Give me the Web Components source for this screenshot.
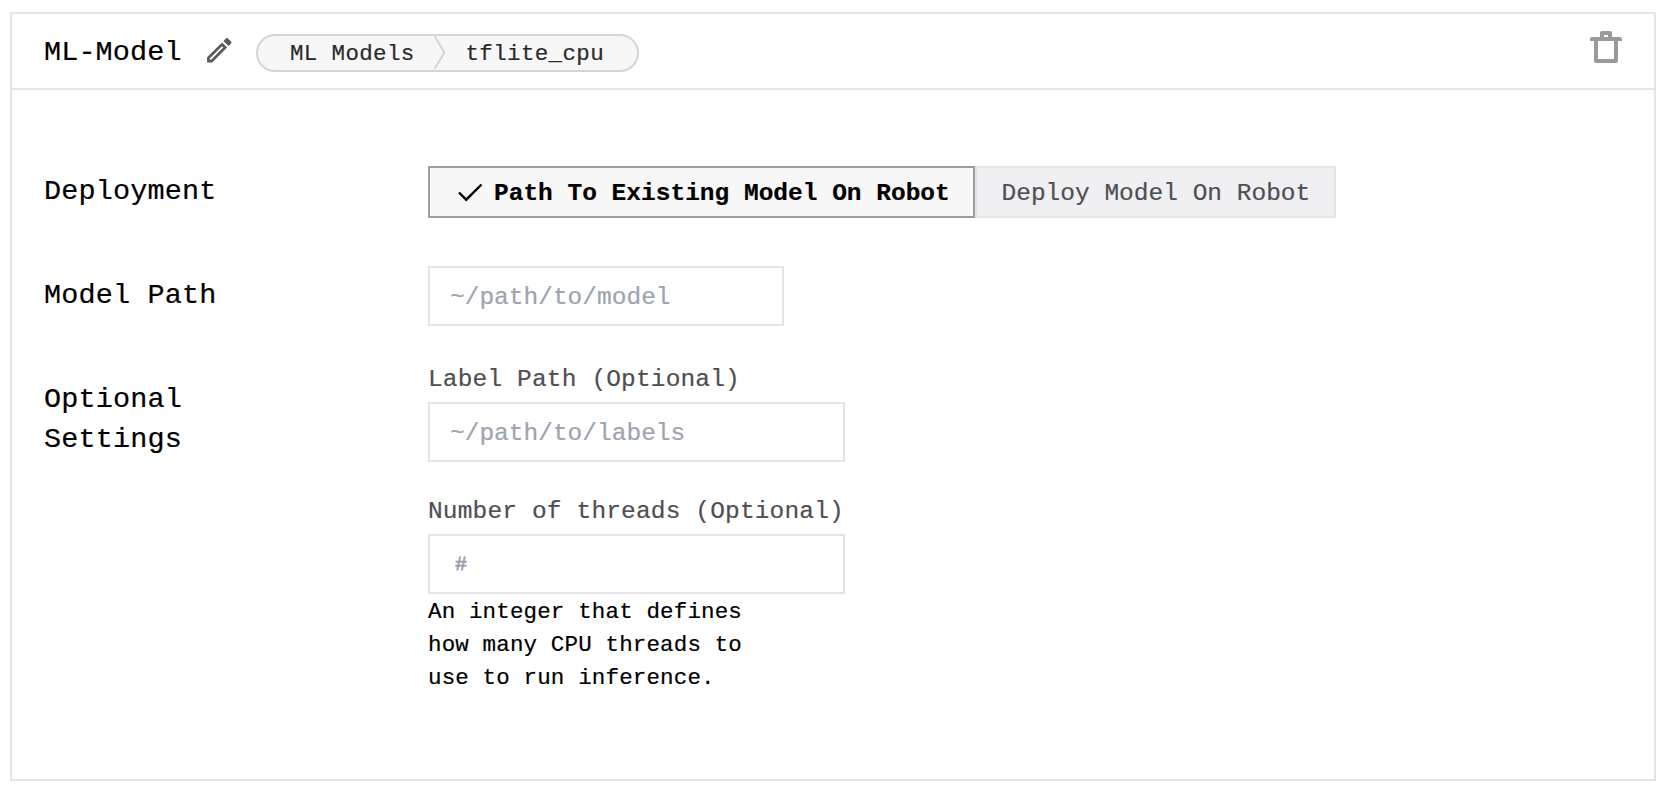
<!DOCTYPE html>
<html lang="en">
<head>
<meta charset="utf-8">
<title>ML-Model</title>
<style>
body{margin:0;background:#fff;color:#000;font-family:"Liberation Mono",monospace;font-size:28.5px;line-height:40px;-webkit-text-stroke:.2px currentColor}
</style>
</head>
<body>
<model-card>
  <card-header slot="header" name="ML-Model">
    <bread-crumbs slot="crumbs"><span>ML Models</span><span slot="leaf">tflite_cpu</span></bread-crumbs>
  </card-header>
  <form-row label="Deployment" style="--drop:6px;--height:100px">
    <toggle-group>
      <toggle-option selected>Path To Existing Model On Robot</toggle-option>
      <toggle-option>Deploy Model On Robot</toggle-option>
    </toggle-group>
  </form-row>
  <form-row label="Model Path" style="--drop:10px;--height:96px">
    <text-field style="--width:356px">~/path/to/model</text-field>
  </form-row>
  <form-row label="Optional Settings" style="--drop:18px">
    <text-field label="Label Path (Optional)">~/path/to/labels</text-field>
    <text-field number label="Number of threads (Optional)">#<span slot="help">An integer that defines how many CPU threads to use to run inference.</span></text-field>
  </form-row>
</model-card>
<script>
const define = (tag, render) => customElements.define(tag, class extends HTMLElement {
  connectedCallback() {
    if (this.shadowRoot) return;
    this.attachShadow({mode: 'open'}).innerHTML = '<style>*{box-sizing:border-box}:host{box-sizing:border-box}</style>' + render(this);
  }
});

define('model-card', () => `
<style>
:host{display:block;width:1646px;height:769px;margin:12px 0 0 10px;border:2px solid #e4e4e4}
main{padding:76px 32px 0}
</style>
<slot name="header"></slot><main><slot></slot></main>`);

define('card-header', el => `
<style>
:host{display:flex;align-items:flex-start;height:76px;padding:0 32px;border-bottom:2px solid #e4e4e4}
h1{margin:19px 0 0;width:158.5px;font:inherit;letter-spacing:.1px;white-space:nowrap}
.edit{margin:20px 21px 0 0;color:#5a5a5a}
slot{display:block;margin-top:20px}
.remove{margin:17px 0 0 auto;color:#9a9a9a}
svg{display:block;flex:none}
</style>
<h1>${el.getAttribute('name')}</h1>
<svg class="edit" width="32.5" height="32.5" viewBox="0 0 24 24" fill="currentColor"><path d="M14.06 9l.94.94L5.92 19H5v-.92L14.06 9M17.66 3c-.25 0-.51.1-.7.29l-1.83 1.83 3.75 3.75 1.83-1.83c.39-.39.39-1.04 0-1.41l-2.34-2.34c-.2-.2-.45-.29-.71-.29m-3.6 3.19L3 17.25V21h3.75L17.81 9.94l-3.75-3.75z"/></svg>
<slot name="crumbs"></slot>
<svg class="remove" width="32" height="32" viewBox="0 0 32 32" fill="currentColor" fill-rule="evenodd"><path d="M12 0h8q2 0 2 2v4h8q2 0 2 2v2h-4v20q0 2-2 2H6q-2 0-2-2V10H0V8q0-2 2-2h8V2q0-2 2-2zM14 4v2h4V4zM8 10v18h16V10z"/></svg>`);

define('bread-crumbs', () => `
<style>
:host{display:flex;width:383px;height:38px;border:2px solid #d5d5d5;border-radius:19px;background:#f7f7f7;color:#2a2a2a;font-size:22.5px;line-height:36px;letter-spacing:.35px;padding-left:32px;white-space:nowrap}
svg{display:block;flex:none;margin:0 19.5px 0 0}
slot{display:block}
div{height:34px}
div:first-of-type{width:143px}
</style>
<div><slot></slot></div><svg width="13" height="34" viewBox="0 0 13 34" fill="none" stroke="#d5d5d5" stroke-width="2"><path d="M1.5 0l10 16.5L1.5 33"/></svg><div><slot name="leaf"></slot></div>`);

define('form-row', el => `
<style>
:host{display:grid;grid-template-columns:384px 1fr;align-items:start;height:var(--height,auto)}
label{width:220px;padding-top:var(--drop);letter-spacing:.15px}
div{display:flex;flex-direction:column;align-items:flex-start;gap:32px}
</style>
<label>${el.getAttribute('label')}</label><div><slot></slot></div>`);

define('toggle-group', () => `
<style>:host{display:flex}</style><slot></slot>`);

define('toggle-option', el => el.hasAttribute('selected') ? `
<style>
:host{display:flex;width:547px;height:52px;border:2px solid #9c9ca4;background:#f7f7f7;font-size:24.5px;font-weight:700;line-height:52px;white-space:nowrap;padding-left:27px}
svg{display:block;margin:14px 11px 0 0}
</style>
<svg width="26" height="22" viewBox="0 0 26 22" fill="none" stroke="#000" stroke-width="2.4"><path d="M2 10.5l7.2 7.2L24.5 2.5"/></svg><slot></slot>` : `
<style>
:host{display:block;width:361px;height:52px;border:2px solid #e4e4e6;background:#f0f0f3;color:#4e4f52;font-size:24.5px;line-height:52px;white-space:nowrap;padding-left:24.5px}
</style><slot></slot>`);

define('text-field', el => `
<style>
:host{display:block;width:var(--width,417px);font-size:24.5px}
label{display:block;height:40px;line-height:36px;color:#4e4f52;letter-spacing:.15px;white-space:nowrap}
.box{height:60px;border:2px solid #e4e4e4;padding-left:20px;line-height:60px;color:#9ca3af;white-space:nowrap}
:host([number]) .box{font-size:20px;line-height:58px;padding-left:25px;-webkit-text-stroke-width:.8px}
p{margin:2px 0 0;width:340px;font-size:22.5px;line-height:33px;letter-spacing:.15px}
</style>
${el.hasAttribute('label') ? `<label>${el.getAttribute('label')}</label>` : ''}
<div class="box"><slot></slot></div>
${el.hasAttribute('number') ? '<p><slot name="help"></slot></p>' : ''}`);
</script>
</body>
</html>
